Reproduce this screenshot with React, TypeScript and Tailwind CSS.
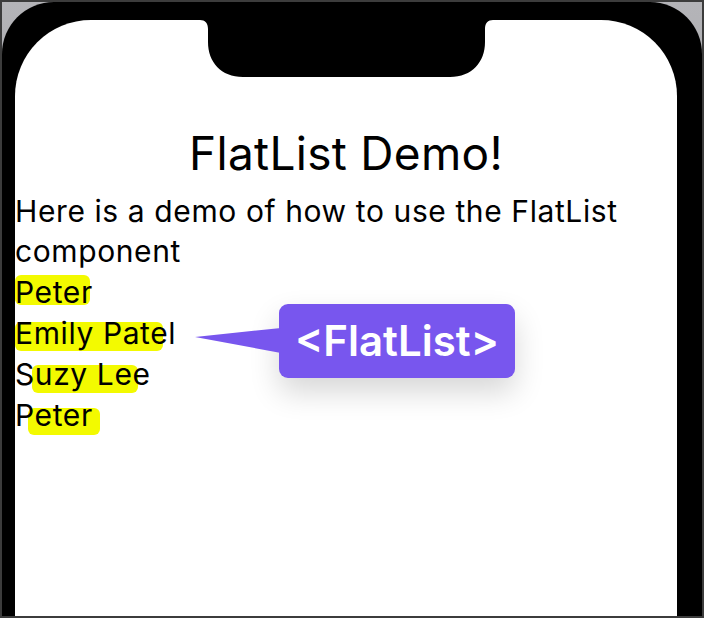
import React from 'react';

type Row = {
  name: string;
  mark: { left: number; top: number; width: number; height: number };
};

const ROWS: Row[] = [
  { name: 'Peter', mark: { left: 0, top: 3, width: 75, height: 30 } },
  { name: 'Emily Patel', mark: { left: 0, top: 9, width: 148, height: 29 } },
  { name: 'Suzy Lee', mark: { left: 17, top: 11, width: 106, height: 28 } },
  { name: 'Peter', mark: { left: 13, top: 13, width: 72, height: 27 } },
];

const Notch: React.FC = () => (
  <svg
    className="absolute top-0 left-[185px]"
    width="293"
    height="57"
    viewBox="0 0 293 57"
  >
    <path
      d="M0 0 H293 C288 0 285 3 285 9 V22 C285 42 272 57 250 57 H43 C21 57 8 42 8 22 V9 C8 3 5 0 0 0 Z"
      fill="#000"
    />
  </svg>
);

const Callout: React.FC = () => (
  <div className="absolute left-[264px] top-[284px] w-[236px] h-[74px] rounded-[9px] bg-[#7856ee] shadow-[0_14px_30px_rgba(0,0,0,0.16)] flex items-center justify-center">
    <svg className="absolute left-[-84px] top-[20px]" width="86" height="36" viewBox="0 0 86 36">
      <polygon points="0,13 86,4 86,29" fill="#7856ee" />
    </svg>
    <span className="text-white text-[42px] font-semibold leading-none">&lt;FlatList&gt;</span>
  </div>
);

export default function App() {
  return (
    <div
      className="w-[704px] h-[618px] overflow-hidden border-2 border-[#3c3c3c] bg-gradient-to-b from-[#b4b4b8] to-[#8d8d90]"
      style={{ fontFamily: 'Inter, "Noto Sans", sans-serif' }}
    >
      <div className="h-full rounded-t-[52px] bg-black pl-[13px] pr-[25px] pt-[18px]">
        <div className="relative h-full rounded-t-[76px] bg-white text-black pt-[106px]">
          <Notch />
          <h1 className="text-center text-[46px] leading-[55px] font-normal tracking-[0.3px]">FlatList Demo!</h1>
          <p className="mt-[10px] text-[30px] leading-[40px] tracking-[0.6px]">
            Here is a demo of how to use the FlatList component
          </p>
          <div className="mt-[1px] flex flex-col">
            {ROWS.map((row, i) => (
              <div key={i} className="relative h-[41px] text-[30px] leading-[41px] tracking-[0.6px]">
                <span
                  className="absolute rounded-[6px] bg-[#f3fa00]"
                  style={{
                    left: row.mark.left,
                    top: row.mark.top,
                    width: row.mark.width,
                    height: row.mark.height,
                  }}
                />
                <span className="relative">{row.name}</span>
              </div>
            ))}
          </div>
          <Callout />
        </div>
      </div>
    </div>
  );
}
